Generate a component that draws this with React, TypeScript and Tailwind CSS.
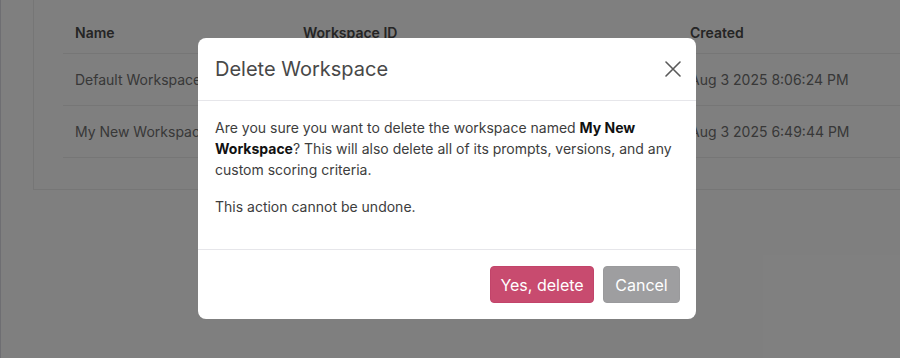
import React from "react";

export default function App() {
  const rows = [
    { name: "Default Workspace", id: "", created: "Aug 3 2025 8:06:24 PM" },
    { name: "My New Workspace", id: "", created: "Aug 3 2025 6:49:44 PM" },
  ];
  return (
    <div
      className="relative w-[900px] h-[358px] overflow-hidden bg-white"
      style={{ fontFamily: "Inter, 'Noto Sans', sans-serif" }}
    >
      {/* page underneath */}
      <div className="flex h-full">
        <div className="w-[3px] h-full bg-[#ececf2] border-r border-[#dcdce4]" />
        <div className="flex-1 pl-[32px]">
          <div className="w-[900px] border-l border-b border-[#ececec] pl-[29px] pb-[31px]">
            <table className="table-fixed w-[860px] border-collapse text-[14px] text-left">
              <colgroup>
                <col className="w-[228px]" />
                <col className="w-[387px]" />
                <col />
              </colgroup>
              <thead>
                <tr className="border-b border-[#ececec]">
                  <th className="pl-[12px] pt-[22px] pb-[10px] font-semibold text-[#4a4a4a] leading-[21px]">Name</th>
                  <th className="pl-[12px] pt-[22px] pb-[10px] font-semibold text-[#4a4a4a] leading-[21px]">Workspace ID</th>
                  <th className="pl-[12px] pt-[22px] pb-[10px] font-semibold text-[#4a4a4a] leading-[21px]">Created</th>
                </tr>
              </thead>
              <tbody>
                {rows.map((r) => (
                  <tr key={r.name} className="border-b border-[#ececec]">
                    <td className="pl-[12px] h-[52px] text-[#707070] whitespace-nowrap">{r.name}</td>
                    <td className="pl-[12px] h-[52px] text-[#707070]">{r.id}</td>
                    <td className="pl-[12px] h-[52px] text-[#707070] whitespace-nowrap">{r.created}</td>
                  </tr>
                ))}
              </tbody>
            </table>
          </div>
        </div>
      </div>

      {/* overlay */}
      <div className="absolute inset-0 bg-black/50" />

      {/* modal */}
      <div className="absolute left-[198px] top-[38px] w-[498px] rounded-lg bg-white">
        <div className="flex items-center justify-between px-[17px] py-4 border-b border-[#e6e6ea]">
          <h2 className="text-[20px] leading-[30px] font-normal text-[#484848]">Delete Workspace</h2>
          <button className="w-[16px] h-[16px] mr-[-2px] flex items-center justify-center text-[#5a5a5a]">
            <svg width="16" height="16" viewBox="0 0 16 16" fill="none" stroke="currentColor" strokeWidth="1.6" strokeLinecap="round">
              <path d="M1 1L15 15M15 1L1 15" />
            </svg>
          </button>
        </div>
        <div className="px-[17px] pt-4 pb-4 text-[14px] leading-[21px] text-[#3d3d3d]">
          <p className="mb-4">
            Are you sure you want to delete the workspace named{" "}
            <strong className="font-bold text-[#111]">My New Workspace</strong>? This will also delete all of its
            prompts, versions, and any custom scoring criteria.
          </p>
          <p className="mb-4">This action cannot be undone.</p>
        </div>
        <div className="flex justify-end gap-[9px] px-4 pt-4 pb-4 border-t border-[#e6e6ea]">
          <button className="h-[37px] w-[104px] rounded-[4px] border border-[#c2446a] bg-[#c84b6f] text-white text-[16px] leading-[24px]">
            Yes, delete
          </button>
          <button className="h-[37px] w-[77px] rounded-[4px] border border-[#9a9a9c] bg-[#9e9ea0] text-white text-[16px] leading-[24px]">
            Cancel
          </button>
        </div>
      </div>
    </div>
  );
}
